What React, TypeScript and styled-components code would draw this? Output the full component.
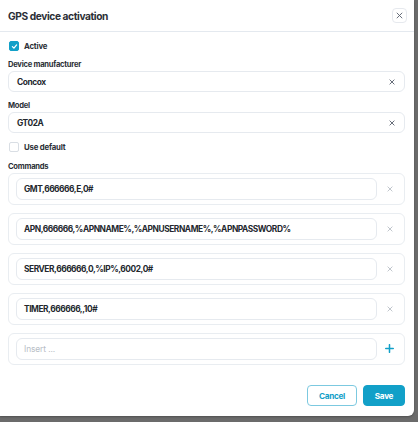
import React from "react";
import styled, { createGlobalStyle } from "styled-components";

const Global = createGlobalStyle`
  html, body { margin: 0; padding: 0; }
  body {
    background: #6b6b6b;
    font-family: Inter, "Noto Sans", sans-serif;
    width: 418px;
    height: 422px;
    overflow: hidden;
  }
`;

const TEAL = "#12a0c8";

const Modal = styled.div`
  width: 414px;
  height: 416px;
  background: #fff;
  border-radius: 0 0 6px 0;
  display: flex;
  flex-direction: column;
  box-shadow: 0 1px 2px rgba(0, 0, 0, 0.25);
`;

const Header = styled.div`
  height: 31px;
  border-bottom: 1px solid #e4e9ef;
  display: flex;
  align-items: center;
  justify-content: space-between;
  padding: 0 7px 0 8px;
`;

const Title = styled.div`
  font-size: 10.2px;
  font-weight: 700;
  color: #2b2f36;
  letter-spacing: -0.4px;
`;

const CloseButton = styled.div`
  width: 13px;
  height: 13px;
  border: 1px solid #e6e9ee;
  border-radius: 4px;
  display: flex;
  align-items: center;
  justify-content: center;
`;

const Body = styled.div`
  flex: 1;
  display: flex;
  flex-direction: column;
  padding: 9px 9px 0 8px;
`;

const Section = styled.div<{ $top?: number }>`
  margin-top: ${(p) => p.$top ?? 0}px;
`;

const CheckRow = styled.label`
  display: flex;
  align-items: center;
  gap: 5px;
  height: 10px;
  padding-left: 1px;
`;

const Box = styled.span<{ $checked?: boolean }>`
  width: 10px;
  height: 10px;
  box-sizing: border-box;
  border-radius: 2px;
  background: ${(p) => (p.$checked ? TEAL : "#fff")};
  border: 1px solid ${(p) => (p.$checked ? TEAL : "#d9dee4")};
  display: flex;
  align-items: center;
  justify-content: center;
`;

const CheckText = styled.span`
  font-size: 7.8px;
  font-weight: 700;
  color: #2b2f36;
  letter-spacing: -0.2px;
`;

const Label = styled.div`
  font-size: 7.6px;
  line-height: 12px;
  padding-top: 2px;
  font-weight: 700;
  color: #2b2f36;
  letter-spacing: -0.25px;
`;

const Input = styled.div`
  height: 21px;
  box-sizing: border-box;
  border: 1px solid #e6eaef;
  border-radius: 6px;
  display: flex;
  align-items: center;
  justify-content: space-between;
  padding: 0 9px 0 8px;
`;

const Value = styled.span<{ $placeholder?: boolean }>`
  font-size: 8.4px;
  font-weight: ${(p) => (p.$placeholder ? 400 : 700)};
  color: ${(p) => (p.$placeholder ? "#b8bec6" : "#23272e")};
  letter-spacing: ${(p) => (p.$placeholder ? "-0.1px" : "-0.45px")};
  white-space: nowrap;
`;

const Commands = styled.div`
  display: flex;
  flex-direction: column;
  gap: 8px;
`;

const CommandRow = styled.div`
  height: 32px;
  box-sizing: border-box;
  border: 1px solid #e9edf1;
  border-radius: 6px;
  display: flex;
  align-items: center;
  padding: 0 0 1px 7px;
`;

const CommandInput = styled.div`
  width: 361px;
  height: 22px;
  box-sizing: border-box;
  border: 1px solid #e6eaef;
  border-radius: 6px;
  display: flex;
  align-items: center;
  padding: 0 7px;
`;

const RowAction = styled.div`
  flex: 1;
  display: flex;
  align-items: center;
  justify-content: center;
  padding-right: 2px;
`;

const Footer = styled.div`
  display: flex;
  justify-content: flex-end;
  gap: 6px;
  padding: 0 9px 10px 0;
`;

const Button = styled.button<{ $primary?: boolean }>`
  height: 21px;
  box-sizing: border-box;
  border-radius: 4px;
  font-family: Inter, "Noto Sans", sans-serif;
  font-size: 8.2px;
  font-weight: 700;
  letter-spacing: -0.3px;
  padding: 0;
  width: ${(p) => (p.$primary ? "42px" : "50px")};
  background: ${(p) => (p.$primary ? TEAL : "#fff")};
  color: ${(p) => (p.$primary ? "#fff" : TEAL)};
  border: 1px solid ${(p) => (p.$primary ? TEAL : "#7cc9e0")};
`;

const XIcon = ({ size, color, w = 1.2 }: { size: number; color: string; w?: number }) => (
  <svg width={size} height={size} viewBox="0 0 10 10">
    <path d="M1.5 1.5 L8.5 8.5 M8.5 1.5 L1.5 8.5" stroke={color} strokeWidth={w} strokeLinecap="round" />
  </svg>
);

const Check = () => (
  <svg width="7" height="7" viewBox="0 0 10 10">
    <path d="M2 5.2 L4.2 7.3 L8 2.8" stroke="#fff" strokeWidth="1.8" fill="none" strokeLinecap="round" strokeLinejoin="round" />
  </svg>
);

const Plus = () => (
  <svg width="9" height="9" viewBox="0 0 10 10">
    <path d="M5 0.8 V9.2 M0.8 5 H9.2" stroke={TEAL} strokeWidth="1.7" strokeLinecap="round" />
  </svg>
);

const commands = [
  "GMT,666666,E,0#",
  "APN,666666,%APNNAME%,%APNUSERNAME%,%APNPASSWORD%",
  "SERVER,666666,0,%IP%,6002,0#",
  "TIMER,666666,,10#",
];

export default function App() {
  return (
    <>
      <Global />
      <Modal>
        <Header>
          <Title>GPS device activation</Title>
          <CloseButton>
            <XIcon size={7} color="#5b6270" w={1.3} />
          </CloseButton>
        </Header>
        <Body>
          <Section>
            <CheckRow>
              <Box $checked>
                <Check />
              </Box>
              <CheckText>Active</CheckText>
            </CheckRow>
          </Section>
          <Section $top={6}>
            <Label>Device manufacturer</Label>
            <Input>
              <Value>Concox</Value>
              <XIcon size={6} color="#4b5260" w={1.4} />
            </Input>
          </Section>
          <Section $top={6}>
            <Label>Model</Label>
            <Input>
              <Value>GT02A</Value>
              <XIcon size={6} color="#4b5260" w={1.4} />
            </Input>
          </Section>
          <Section $top={9}>
            <CheckRow>
              <Box />
              <CheckText>Use default</CheckText>
            </CheckRow>
          </Section>
          <Section $top={7}>
            <Label>Commands</Label>
            <Commands>
              {commands.map((c) => (
                <CommandRow key={c}>
                  <CommandInput>
                    <Value>{c}</Value>
                  </CommandInput>
                  <RowAction>
                    <XIcon size={6} color="#a9afb8" w={1.2} />
                  </RowAction>
                </CommandRow>
              ))}
              <CommandRow>
                <CommandInput>
                  <Value $placeholder>Insert ...</Value>
                </CommandInput>
                <RowAction>
                  <Plus />
                </RowAction>
              </CommandRow>
            </Commands>
          </Section>
        </Body>
        <Footer>
          <Button>Cancel</Button>
          <Button $primary>Save</Button>
        </Footer>
      </Modal>
    </>
  );
}
